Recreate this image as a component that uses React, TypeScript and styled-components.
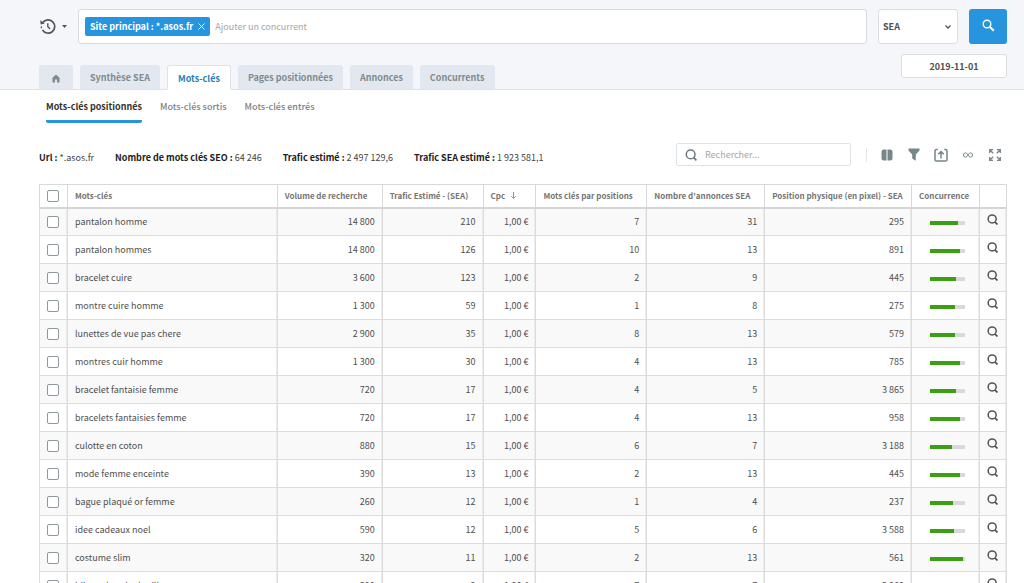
import React from 'react';
import styled, { createGlobalStyle, css } from 'styled-components';

const Global = createGlobalStyle`
  * { box-sizing: border-box; }
  html { overflow: hidden; }
  body { margin: 0; background: #fff; }
  body, button, input, select {
    font-family: "Noto Sans CJK JP", "Noto Sans", sans-serif;
    font-size: 9px;
    line-height: 14px;
    color: #4f4f4f;
  }
`;

const Page = styled.div`
  min-width: 960px;
`;

const Header = styled.header`
  background: #f5f6fa;
  border-bottom: 1px solid #dfe2e8;
  padding: 9px 17px 0 39px;
`;

const SearchRow = styled.form`
  display: flex;
  align-items: center;
  gap: 11px;
`;

const HistoryButton = styled.button`
  display: flex;
  align-items: center;
  gap: 6px;
  height: 35px;
  padding: 0;
  border: 0;
  background: none;
  color: #555;
`;

const SiteBox = styled.div`
  flex: 1;
  display: flex;
  align-items: center;
  gap: 5px;
  height: 35px;
  padding: 0 6px;
  background: #fff;
  border: 1px solid #d9dcdf;
  border-radius: 3px;
`;

const Tag = styled.span`
  display: flex;
  align-items: center;
  gap: 5px;
  height: 19px;
  padding: 0 5px;
  border-radius: 2px;
  background: #2794de;
  color: #fff;
  font-weight: 700;
`;

const TagClose = styled.button`
  display: flex;
  padding: 0;
  border: 0;
  background: none;
  color: #fff;
`;

const PlainInput = styled.input`
  flex: 1;
  min-width: 0;
  padding: 0;
  border: 0;
  outline: 0;
  background: none;
  &::placeholder { color: #a6a6a6; opacity: 1; }
`;

const SelectBox = styled.div`
  display: grid;
  align-items: center;
  width: 80px;
  color: #555;
  > * { grid-area: 1 / 1; }
  > svg { justify-self: end; margin-right: 7px; pointer-events: none; }
`;

const Select = styled.select`
  appearance: none;
  width: 100%;
  height: 35px;
  padding: 0 4px;
  border: 1px solid #dcdfe1;
  border-radius: 3px;
  background: #fff;
  font-weight: 700;
`;

const SubmitButton = styled.button`
  display: flex;
  align-items: center;
  justify-content: center;
  width: 38px;
  height: 35px;
  padding: 0 0 2px;
  border: 0;
  border-radius: 3px;
  background: #2794de;
  color: #fff;
`;

const TabRow = styled.div`
  display: flex;
  justify-content: space-between;
  align-items: flex-end;
  padding-top: 10px;
`;

const Tabs = styled.nav`
  display: flex;
  gap: 7px;
  margin-bottom: -1px;
`;

const Tab = styled.a<{ $active?: boolean; $icon?: boolean }>`
  display: flex;
  align-items: center;
  height: 25px;
  padding: 2px ${p => (p.$icon ? 12 : 10)}px 0;
  border-radius: 3px 3px 0 0;
  background: #e3e7ef;
  border-bottom: 1px solid #dfe2e8;
  color: #7f8c8d;
  font-weight: 700;
  text-decoration: none;
  ${p => p.$active && css`
    background: #fff;
    border: 1px solid #dfe2e8;
    border-bottom-color: #fff;
    color: #2980b9;
  `}
`;

const DateButton = styled.button`
  width: 106px;
  height: 24px;
  margin-bottom: 11px;
  padding: 2px 0 0;
  border: 1px solid #dcdfe1;
  border-radius: 3px;
  background: #fff;
  font-weight: 700;
`;

const Main = styled.main`
  padding: 0 17px 0 39px;
`;

const SubTabs = styled.nav`
  display: flex;
  gap: 18px;
  padding: 0 7px;
`;

const SubTab = styled.a<{ $active?: boolean }>`
  padding: 10px 0 6px;
  border-bottom: 3px solid ${p => (p.$active ? '#2794de' : 'transparent')};
  border-radius: 2px;
  color: ${p => (p.$active ? '#333' : '#7d8183')};
  font-weight: ${p => (p.$active ? 700 : 500)};
  text-decoration: none;
`;

const Summary = styled.div`
  display: flex;
  align-items: center;
  justify-content: space-between;
  padding: 20px 0 18px;
`;

const Stats = styled.div`
  display: flex;
  gap: 21px;
  padding-top: 6px;
  color: #444;
  strong { color: #222; }
`;

const Tools = styled.div`
  display: flex;
  align-items: center;
  gap: 15px;
`;

const SearchField = styled.label`
  display: flex;
  align-items: center;
  gap: 8px;
  width: 175px;
  height: 23px;
  padding: 0 8px;
  border: 1px solid #dfe2e6;
  border-radius: 2px;
  color: #6b7a80;
`;

const ToolIcons = styled.div`
  display: flex;
  align-items: center;
  gap: 13px;
  padding: 0 5px 0 13px;
  border-left: 1px solid #e3e6e8;
  color: #76868b;
`;

const ToolButton = styled.button`
  display: flex;
  align-items: center;
  justify-content: center;
  width: 14px;
  height: 14px;
  padding: 0;
  border: 0;
  background: none;
  color: inherit;
`;

const Table = styled.table`
  width: 100%;
  table-layout: fixed;
  border-collapse: collapse;
  border: 1px solid #d9d9d9;
`;

const Th = styled.th`
  height: 23px;
  padding: 0 7px;
  border: 1px solid #d9d9d9;
  border-bottom: 2px solid #d5d5d5;
  color: #757575;
  font-size: 8px;
  font-weight: 700;
  text-align: left;
  white-space: nowrap;
`;

const HeadLabel = styled.span`
  display: flex;
  align-items: center;
  gap: 5px;
`;

const Tr = styled.tr`
  &:nth-child(odd) { background: #f9f9f9; }
`;

const Td = styled.td<{ $num?: boolean; $icon?: boolean }>`
  height: 28px;
  padding: ${p => (p.$icon ? '0 0 5px' : '0 7px')};
  border: 1px solid #dcdcdc;
  box-shadow: inset -1px 0 #ececec;
  text-align: ${p => (p.$icon ? 'center' : p.$num ? 'right' : 'left')};
  white-space: nowrap;
`;

const CheckCell = styled(Td)`
  padding: 1px 7px 0;
`;

const Checkbox = styled.input`
  appearance: none;
  display: block;
  width: 12px;
  height: 12px;
  margin: 0;
  border: 1px solid #8d999c;
  border-radius: 2px;
  background: #fff;
`;

const Track = styled.div`
  width: 35px;
  height: 4px;
  margin: 3px 0 0 11px;
  background: #d9d9d9;
`;

const Fill = styled.div`
  height: 4px;
  background: #3aa010;
`;

const RowButton = styled.button`
  display: inline-flex;
  padding: 0;
  border: 0;
  background: none;
  color: #555;
  vertical-align: middle;
`;

const Magnifier = ({ size = 11, width = 2 }: { size?: number; width?: number }) => (
  <svg width={size} height={size} viewBox="0 0 16 16" fill="none" stroke="currentColor" strokeWidth={width}>
    <circle cx="7.5" cy="7.2" r="5.8" />
    <path d="M11.300 11.300l3.900 3.900" strokeWidth={width + 0.3} />
  </svg>
);

type Row = [string, string, string, string, string, string, number];

const rows: Row[] = [
  ['pantalon homme', '14 800', '210', '7', '31', '295', 80],
  ['pantalon hommes', '14 800', '126', '10', '13', '891', 86],
  ['bracelet cuire', '3 600', '123', '2', '9', '445', 75],
  ['montre cuire homme', '1 300', '59', '1', '8', '275', 72],
  ['lunettes de vue pas chere', '2 900', '35', '8', '13', '579', 72],
  ['montres cuir homme', '1 300', '30', '4', '13', '785', 86],
  ['bracelet fantaisie femme', '720', '17', '4', '5', '3 865', 75],
  ['bracelets fantaisies femme', '720', '17', '4', '13', '958', 86],
  ['culotte en coton', '880', '15', '6', '7', '3 188', 63],
  ['mode femme enceinte', '390', '13', '2', '13', '445', 86],
  ['bague plaqué or femme', '260', '12', '1', '4', '237', 66],
  ['idee cadeaux noel', '590', '12', '5', '6', '3 588', 69],
  ['costume slim', '320', '11', '2', '13', '561', 93],
  ['bijoux dans la douille', '390', '9', '7', '7', '3 060', 80],
];

const columns = [28, 210, 105, 101, 53, 111, 118, 147, 68, 27];

export default function App() {
  return (
    <Page>
      <Global />
      <Header>
        <SearchRow onSubmit={e => e.preventDefault()}>
          <HistoryButton type="button" aria-label="Historique">
            <svg width="17" height="17" viewBox="0 0 17 17" fill="none" stroke="currentColor" strokeWidth="1.700">
              <path d="M3.800 4.600A6.600 6.600 0 1 1 3.400 11.800" />
              <path d="M2.400 10.200l-.1-1.800" strokeWidth="1.300" />
              <path d="M8.800 5.200v3.500l2.300 2.200" strokeWidth="1.400" />
              <path d="M1.200 2.300l.5 4.200 4.100-.9z" fill="currentColor" stroke="none" />
            </svg>
            <svg width="5" height="3" viewBox="0 0 5 3" fill="currentColor"><path d="M0 0h5L2.500 3z" /></svg>
          </HistoryButton>
          <SiteBox>
            <Tag>
              Site principal : *.asos.fr
              <TagClose type="button" aria-label="Retirer">
                <svg width="7" height="7" viewBox="0 0 7 7" stroke="currentColor"><path d="M.5.5l6 6M6.500.5l-6 6" /></svg>
              </TagClose>
            </Tag>
            <PlainInput aria-label="Ajouter un concurrent" placeholder="Ajouter un concurrent" />
          </SiteBox>
          <SelectBox>
            <Select aria-label="Type" defaultValue="SEA"><option>SEA</option><option>SEO</option></Select>
            <svg width="6" height="4" viewBox="0 0 6 4" fill="none" stroke="currentColor" strokeWidth="1.300"><path d="M.5.5L3 3 5.500.5" /></svg>
          </SelectBox>
          <SubmitButton aria-label="Rechercher">
            <svg width="13" height="13" viewBox="0 0 13 13" fill="none" stroke="currentColor">
              <circle cx="5" cy="5" r="3.800" strokeWidth="1.400" />
              <path d="M7.800 7.800l4 4" strokeWidth="2" />
            </svg>
          </SubmitButton>
        </SearchRow>
        <TabRow>
          <Tabs>
            <Tab href="#accueil" aria-label="Accueil" $icon>
              <svg width="10" height="9" viewBox="0 0 10 9" fill="currentColor"><path d="M5 .4L9.300 4.400H8.500V8.500H6V5.500H4V8.500H1.500V4.400H.7z" /></svg>
            </Tab>
            <Tab href="#synthese">Synthèse SEA</Tab>
            <Tab href="#mots" $active>Mots-clés</Tab>
            <Tab href="#pages">Pages positionnées</Tab>
            <Tab href="#annonces">Annonces</Tab>
            <Tab href="#concurrents">Concurrents</Tab>
          </Tabs>
          <DateButton type="button">2019-11-01</DateButton>
        </TabRow>
      </Header>
      <Main>
        <SubTabs>
          <SubTab href="#positionnes" $active>Mots-clés positionnés</SubTab>
          <SubTab href="#sortis">Mots-clés sortis</SubTab>
          <SubTab href="#entres">Mots-clés entrés</SubTab>
        </SubTabs>
        <Summary>
          <Stats>
            <span><strong>Url :</strong> *.asos.fr</span>
            <span><strong>Nombre de mots clés SEO :</strong> 64 246</span>
            <span><strong>Trafic estimé :</strong> 2 497 129,6</span>
            <span><strong>Trafic SEA estimé :</strong> 1 923 581,1</span>
          </Stats>
          <Tools>
            <SearchField>
              <Magnifier size={12} width={2} />
              <PlainInput aria-label="Rechercher" placeholder="Rechercher..." />
            </SearchField>
            <ToolIcons>
              <ToolButton aria-label="Colonnes">
                <svg width="12" height="12" viewBox="0 0 12 12" fill="currentColor"><path d="M5.500.5v11H3A2.500 2.500 0 0 1 .5 9V3A2.500 2.500 0 0 1 3 .5zM6.500.5v11H9A2.500 2.500 0 0 0 11.500 9V3A2.500 2.500 0 0 0 9 .5z" /></svg>
              </ToolButton>
              <ToolButton aria-label="Filtrer">
                <svg width="12" height="13" viewBox="0 0 12 13" fill="currentColor"><path d="M.5.5h11v2L7.800 6.500v6.200L4.200 10.500v-4L.5 2.500z" /></svg>
              </ToolButton>
              <ToolButton aria-label="Exporter">
                <svg width="14" height="14" viewBox="0 0 14 14" fill="none" stroke="currentColor" strokeWidth="1.500"><path d="M3.800 1.500H2.300Q1 1.500 1 2.800V11.700Q1 13 2.300 13H11.700Q13 13 13 11.700V2.800Q13 1.500 11.700 1.500H10.200M7 10.500V3.500M4.200 6.300L7 3.500 9.800 6.300" /></svg>
              </ToolButton>
              <ToolButton aria-label="Tout afficher">
                <svg width="10" height="6" viewBox="0 0 10 6" fill="none" stroke="currentColor"><path d="M5 3C4 1.500 3.400.9 2.500.9a2.100 2.100 0 0 0 0 4.200C3.400 5.100 4 4.500 5 3S6.600.9 7.500.9a2.100 2.100 0 0 1 0 4.200C6.600 5.100 6 4.500 5 3z" /></svg>
              </ToolButton>
              <ToolButton aria-label="Plein écran">
                <svg width="12" height="12" viewBox="0 0 12 12" fill="none" stroke="currentColor" strokeWidth="1.300"><path d="M.7 4V.7H4M.7.7l3.500 3.500M8 .7h3.300V4M11.300.7L7.800 4.200M.7 8v3.300H4M.7 11.300l3.500-3.500M8 11.300h3.300V8M11.300 11.300L7.800 7.800" /></svg>
              </ToolButton>
            </ToolIcons>
          </Tools>
        </Summary>
        <Table>
          <colgroup>
            {columns.map((w, i) => <col key={i} style={{ width: `${(w / 968) * 100}%` }} />)}
          </colgroup>
          <thead>
            <tr>
              <Th><Checkbox type="checkbox" aria-label="Tout sélectionner" /></Th>
              <Th>Mots-clés</Th>
              <Th>Volume de recherche</Th>
              <Th>Trafic Estimé - (SEA)</Th>
              <Th>
                <HeadLabel>
                  Cpc
                  <svg width="7" height="7" viewBox="0 0 7 7" fill="none" stroke="#8a9497"><path d="M3.500 0v6.300M1.300 4.200l2.200 2.200 2.200-2.200" /></svg>
                </HeadLabel>
              </Th>
              <Th>Mots clés par positions</Th>
              <Th>Nombre d'annonces SEA</Th>
              <Th>Position physique (en pixel) - SEA</Th>
              <Th>Concurrence</Th>
              <Th aria-label="Détails" />
            </tr>
          </thead>
          <tbody>
            {rows.map(([keyword, volume, traffic, positions, ads, pixel, level]) => (
              <Tr key={keyword}>
                <CheckCell><Checkbox type="checkbox" aria-label={keyword} /></CheckCell>
                <Td>{keyword}</Td>
                <Td $num>{volume}</Td>
                <Td $num>{traffic}</Td>
                <Td $num>1,00 €</Td>
                <Td $num>{positions}</Td>
                <Td $num>{ads}</Td>
                <Td $num>{pixel}</Td>
                <Td><Track><Fill style={{ width: `${level}%` }} /></Track></Td>
                <Td $icon><RowButton aria-label={`Détails ${keyword}`}><Magnifier size={11} width={2.2} /></RowButton></Td>
              </Tr>
            ))}
          </tbody>
        </Table>
      </Main>
    </Page>
  );
}
